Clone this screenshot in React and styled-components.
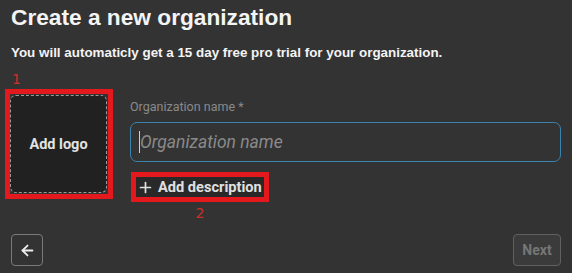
import React from "react";
import styled, { createGlobalStyle } from "styled-components";
import { ArrowLeft, Plus } from "lucide-react";

const Global = createGlobalStyle`
  html, body { margin: 0; padding: 0; background: #333333; }
  body { font-family: Roboto, "Liberation Sans", Arial, sans-serif; }
  * { box-sizing: border-box; }
`;

const Page = styled.div`
  height: 273px;
  display: flex;
  flex-direction: column;
  padding: 4px 11px 7px 11px;
  color: #f2f2f2;
`;

const Title = styled.h1`
  margin: 0;
  font-family: "Liberation Sans", Arial, sans-serif;
  font-size: 22.7px;
  font-weight: 700;
  line-height: 26px;
  color: #f4f4f4;
`;

const Subtitle = styled.p`
  margin: 15px 0 0 0;
  font-family: "Liberation Sans", Arial, sans-serif;
  font-size: 13.4px;
  font-weight: 700;
  line-height: 15px;
  color: #f4f4f4;
`;

const FormRow = styled.div`
  margin-top: 35px;
  display: flex;
  align-items: flex-start;
  gap: 23px;
`;

const Highlight = styled.div`
  position: relative;
  outline: 5px solid #e3191d;
  outline-offset: ${(p) => p.$offset || 0}px;
`;

const Marker = styled.span`
  position: absolute;
  font-family: "DejaVu Sans", sans-serif;
  font-size: 14px;
  line-height: 14px;
  color: #c9302c;
  ${(p) =>
    p.$below
      ? `top: calc(100% + 9px); left: 50%; transform: translateX(-50%);`
      : `top: -23px; left: 1px;`}
`;

const LogoBox = styled.button`
  width: 97px;
  height: 98px;
  margin-left: -1px;
  background: #212121;
  border: 1px dashed #9a9a9a;
  border-radius: 6px;
  display: flex;
  align-items: center;
  justify-content: center;
  font-family: Roboto, sans-serif;
  font-size: 14.5px;
  font-weight: 700;
  color: #e2e2e2;
  padding: 0;
  cursor: pointer;
`;

const Fields = styled.div`
  flex: 1;
  display: flex;
  flex-direction: column;
  align-items: flex-start;
  padding-top: 4px;
`;

const Label = styled.label`
  font-size: 12.5px;
  color: #8a8a8a;
  line-height: 15px;
`;

const InputWrap = styled.div`
  position: relative;
  align-self: stretch;
  margin-top: 8px;
  &::before {
    content: "";
    position: absolute;
    left: 9px;
    top: 9px;
    width: 1px;
    height: 22px;
    background: #cfcfcf;
  }
`;

const Input = styled.input`
  width: 100%;
  height: 40px;
  background: transparent;
  border: 1px solid #3b82ad;
  border-radius: 7px;
  padding: 0 9px;
  font-family: Roboto, sans-serif;
  font-size: 17.5px;
  font-style: italic;
  color: #e0e0e0;
  outline: none;
  &::placeholder { color: #8a8a8a; }
`;

const DescWrap = styled(Highlight)`
  margin-top: 15px;
  margin-left: 6px;
`;

const DescButton = styled.button`
  height: 20px;
  display: flex;
  align-items: center;
  gap: 4px;
  padding: 0 2px 0 1px;
  background: #292929;
  border: none;
  font-family: Roboto, sans-serif;
  font-size: 14.6px;
  font-weight: 700;
  color: #e0e0e0;
  cursor: pointer;
`;

const Footer = styled.div`
  margin-top: auto;
  display: flex;
  justify-content: space-between;
  align-items: center;
`;

const BackButton = styled.button`
  width: 32px;
  height: 32px;
  display: flex;
  align-items: center;
  justify-content: center;
  background: transparent;
  border: 1px solid #7a7a7a;
  border-radius: 4px;
  color: #ececec;
  padding: 0;
`;

const NextButton = styled.button`
  width: 48px;
  height: 32px;
  background: #3b3b3b;
  border: 1px solid #606060;
  border-radius: 4px;
  font-family: Roboto, sans-serif;
  font-size: 14px;
  font-weight: 700;
  color: #767676;
  padding: 0;
`;

export default function App() {
  return (
    <>
      <Global />
      <Page>
        <Title>Create a new organization</Title>
        <Subtitle>
          You will automaticly get a 15 day free pro trial for your organization.
        </Subtitle>
        <FormRow>
          <Highlight $offset={1}>
            <Marker>1</Marker>
            <LogoBox>Add logo</LogoBox>
          </Highlight>
          <Fields>
            <Label>Organization name *</Label>
            <InputWrap>
              <Input placeholder="Organization name" />
            </InputWrap>
            <DescWrap>
              <DescButton>
                <Plus size={17} strokeWidth={2.4} />
                Add description
              </DescButton>
              <Marker $below>2</Marker>
            </DescWrap>
          </Fields>
        </FormRow>
        <Footer>
          <BackButton>
            <ArrowLeft size={17} strokeWidth={2.5} />
          </BackButton>
          <NextButton>Next</NextButton>
        </Footer>
      </Page>
    </>
  );
}
